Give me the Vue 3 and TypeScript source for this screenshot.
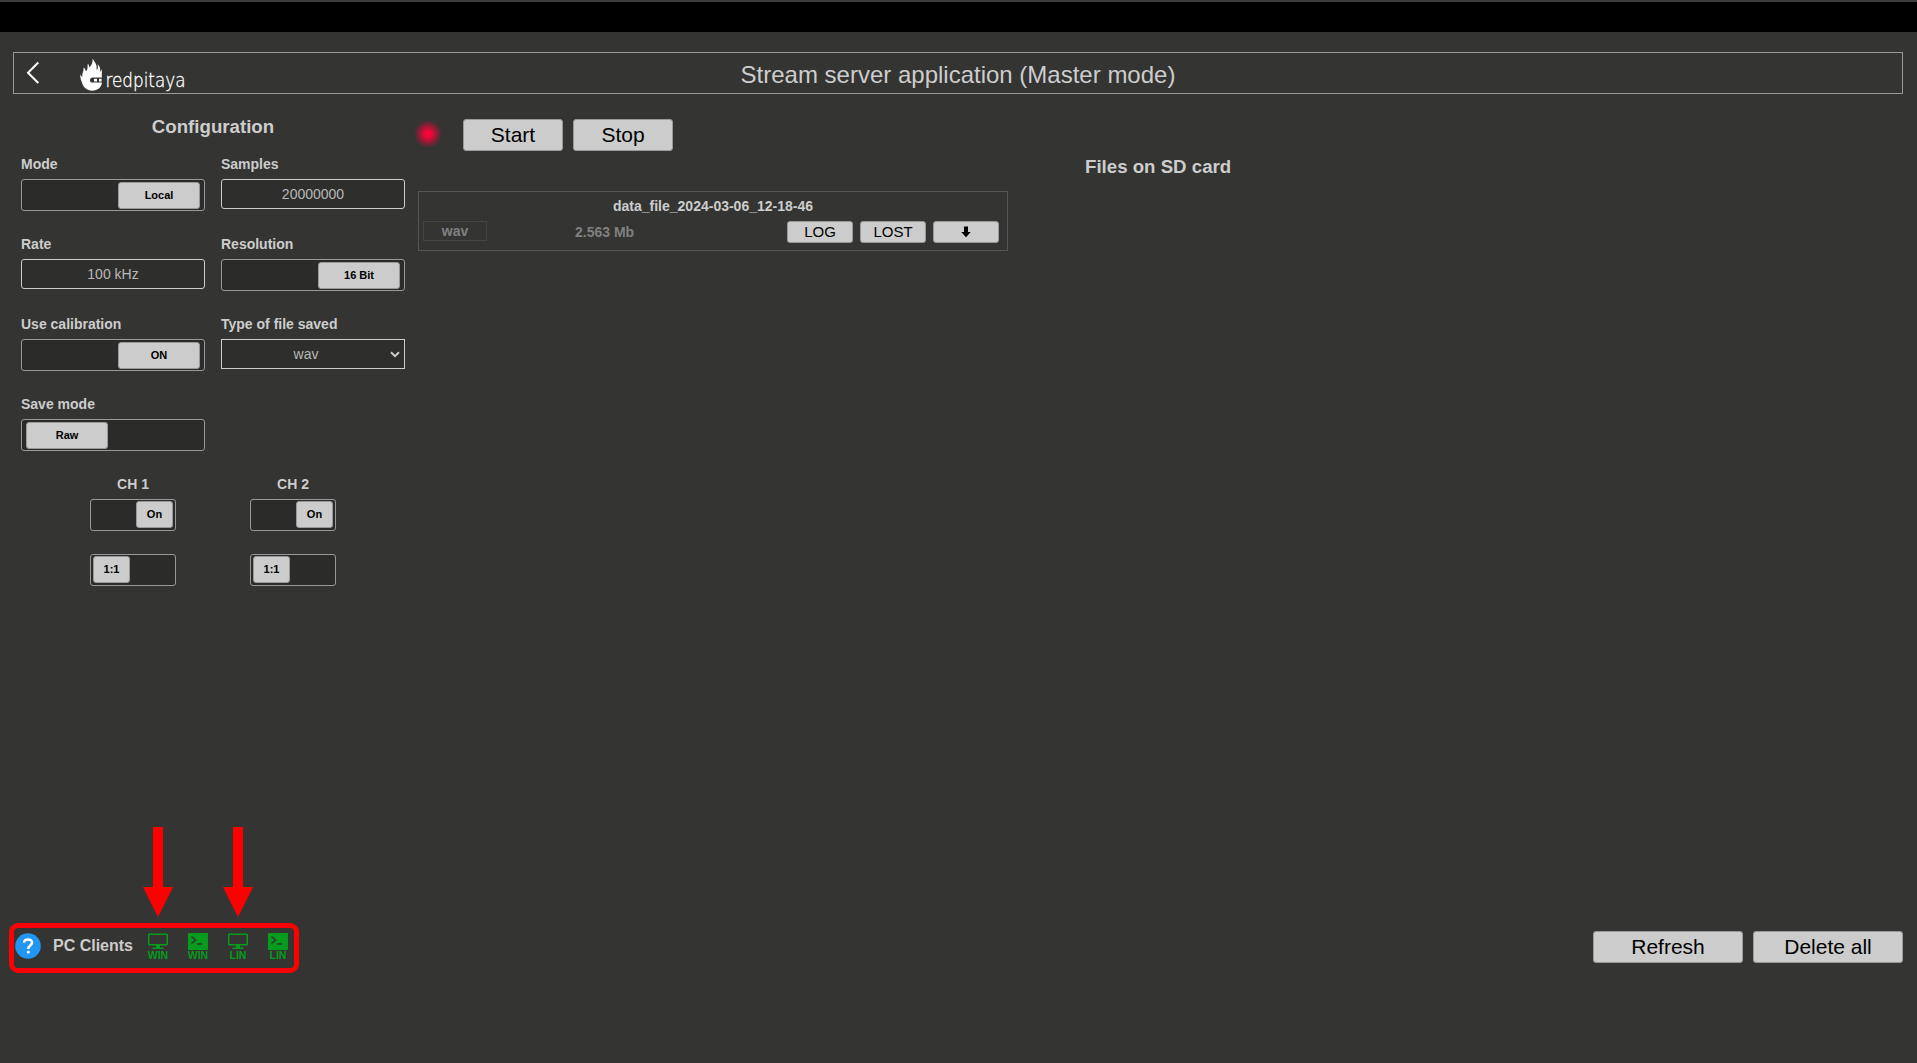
<script setup lang="ts">
interface Field {
  label: string
  kind: 'toggle' | 'input' | 'select'
  value: string
  side?: 'left' | 'right'
}

interface Client {
  icon: 'monitor' | 'console'
  os: string
}

const fields: Field[] = [
  { label: 'Mode', kind: 'toggle', value: 'Local', side: 'right' },
  { label: 'Samples', kind: 'input', value: '20000000' },
  { label: 'Rate', kind: 'input', value: '100 kHz' },
  { label: 'Resolution', kind: 'toggle', value: '16 Bit', side: 'right' },
  { label: 'Use calibration', kind: 'toggle', value: 'ON', side: 'right' },
  { label: 'Type of file saved', kind: 'select', value: 'wav' },
  { label: 'Save mode', kind: 'toggle', value: 'Raw', side: 'left' },
]

const channels: string[] = ['CH 1', 'CH 2']

const clients: Client[] = [
  { icon: 'monitor', os: 'WIN' },
  { icon: 'console', os: 'WIN' },
  { icon: 'monitor', os: 'LIN' },
  { icon: 'console', os: 'LIN' },
]
</script>

<template>
  <div class="page">
    <div class="topbar"></div>

    <header class="header">
      <div class="brand">
        <svg class="back" width="14" height="24" viewBox="0 0 14 24">
          <path d="M12.3 1.5 2 11.7 12.3 22" fill="none" stroke="#fff" stroke-width="2" />
        </svg>
        <svg class="logo" width="116" height="36" viewBox="0 0 116 36">
          <path
            fill="#fff"
            d="M12.6 .5C13.6 3 16.4 5 16.6 8.6C16.7 10.2 16.5 11 16.8 12C17.8 11 18.2 9.5 17.7 6.2C20 8.3 20.6 10.8 20 14C20.8 13.4 21.2 12.4 21.2 11C22.6 13.4 21.7 16 21.7 17.6L22 19.5H12.5Q10 19.6 10 22Q10 24.6 12.5 24.6H22C21.5 29.5 17.5 32.7 12.3 32.7C6.8 32.7 3 29.4 2 24.6C1 22 .1 20.2 .3 16C.8 17.8 1.5 18.6 2.3 18.8C2 14.8 4.1 13.2 3.4 9.6C5 10.6 5.7 11.8 5.8 13.4C8.3 11.4 7.3 8 7.8 5.8C8.8 6.9 9.3 8 9.4 9.4C11.7 7 12.9 4.8 12.6 .5Z"
          />
          <path d="M14 20.8h3v2.6h-3zM19 20.8h2.6v2.6H19z" fill="#fff" />
          <text
            x="25.5"
            y="29.3"
            class="wordmark"
            textLength="80"
            lengthAdjust="spacingAndGlyphs"
          >redpitaya</text>
        </svg>
      </div>
      <h1 class="title">Stream server application (Master mode)</h1>
      <div></div>
    </header>

    <main class="main">
      <section class="config">
        <h2 class="config-title">Configuration</h2>
        <div class="fields">
          <div v-for="f in fields" :key="f.label" class="field">
            <label class="label">{{ f.label }}</label>
            <div v-if="f.kind === 'toggle'" class="toggle" :class="f.side">
              <span class="knob">{{ f.value }}</span>
            </div>
            <div v-else class="input" :class="{ select: f.kind === 'select' }">
              <span class="value">{{ f.value }}</span>
              <svg v-if="f.kind === 'select'" width="10" height="7" viewBox="0 0 10 7">
                <path d="M1 1.2 5 5.2 9 1.2" fill="none" stroke="#ccc" stroke-width="2" />
              </svg>
            </div>
          </div>
        </div>
        <div class="channels">
          <div v-for="c in channels" :key="c" class="channel">
            <label class="label">{{ c }}</label>
            <div class="toggle small right"><span class="knob">On</span></div>
            <div class="toggle small left"><span class="knob">1:1</span></div>
          </div>
        </div>
      </section>

      <section class="stream">
        <div class="controls">
          <span class="led"></span>
          <button class="btn run">Start</button>
          <button class="btn run">Stop</button>
        </div>
        <article class="file">
          <div class="file-name">data_file_2024-03-06_12-18-46</div>
          <div class="file-row">
            <span class="tag">wav</span>
            <span class="size">2.563 Mb</span>
            <div class="file-actions">
              <button class="btn mini">LOG</button>
              <button class="btn mini">LOST</button>
              <button class="btn mini">
                <svg width="10" height="12" viewBox="0 0 10 12">
                  <path d="M3 .5H7V6H9.7L5 11.2.3 6H3Z" fill="#000" />
                </svg>
              </button>
            </div>
          </div>
        </article>
      </section>

      <section class="card">
        <h2 class="card-title">Files on SD card</h2>
      </section>
    </main>

    <footer class="footer">
      <div class="clients">
        <svg class="help" width="26" height="26" viewBox="0 0 26 26">
          <circle cx="13" cy="13" r="12.8" fill="#2196f3" />
          <path
            d="M9 9.8C9 7.6 10.7 6.4 13 6.4s4 1.2 4 3.3c0 2.8-3.7 3-3.7 6.2"
            fill="none"
            stroke="#fff"
            stroke-width="2.5"
          />
          <rect x="11.9" y="17.7" width="2.8" height="2.8" rx="1" fill="#fff" />
        </svg>
        <span class="clients-label">PC Clients</span>
        <div class="client-list">
          <div v-for="(c, i) in clients" :key="i" class="client">
            <svg v-if="c.icon === 'monitor'" width="20" height="17" viewBox="0 0 20 17">
              <rect x="0.75" y="1.25" width="18.5" height="10.5" rx="0.5" fill="none" stroke="#059c1d" stroke-width="1.5" />
              <path d="M8 12h4v2.5h3.5V16h-11v-1.5H8z" fill="#059c1d" />
            </svg>
            <svg v-else width="20" height="17" viewBox="0 0 20 17">
              <rect width="20" height="17" rx="1" fill="#059c1d" />
              <path d="M3.5 3.5 7.5 7 3.5 10.5M9 11h5" fill="none" stroke="#333432" stroke-width="1.5" />
            </svg>
            <span class="os">{{ c.os }}</span>
          </div>
        </div>
      </div>
      <div class="card-actions">
        <button class="btn wide">Refresh</button>
        <button class="btn wide">Delete all</button>
      </div>
    </footer>

    <svg class="marks" width="300" height="160" viewBox="0 0 300 160">
      <path d="M153 7h10v60h10l-15 30-15-30h10zM233 7h10v60h10l-15 30-15-30h10z" fill="#f00" />
      <rect x="11.5" y="105.5" width="285" height="45" rx="6.5" fill="none" stroke="#f00" stroke-width="5" />
    </svg>
  </div>
</template>

<style>
body {
  margin: 0;
  background: #343432;
}
</style>

<style scoped>
.page {
  position: relative;
  box-sizing: border-box;
  height: 1063px;
  overflow: hidden;
  display: flex;
  flex-direction: column;
  background: #343432;
  color: #cdcdcd;
  font-family: "Liberation Sans", Arial, sans-serif;
  font-size: 14px;
}
.page * {
  box-sizing: border-box;
}
.topbar {
  height: 32px;
  flex: none;
  background: #000;
  border-top: 2px solid #3c3c3c;
}
.header {
  margin: 20px 14px 0 13px;
  height: 42px;
  flex: none;
  border: 1px solid #999;
  display: grid;
  grid-template-columns: 1fr auto 1fr;
}
.brand {
  display: flex;
  align-items: flex-start;
}
.back {
  margin: 8px 0 0 12px;
}
.logo {
  margin: 5px 0 0 40px;
  overflow: visible;
}
.wordmark {
  font-family: "DejaVu Sans", sans-serif;
  font-weight: 200;
  font-size: 20px;
  fill: #fff;
  stroke: #fff;
  stroke-width: 0.35px;
}
.title {
  margin: 0;
  font-size: 24px;
  font-weight: 400;
  line-height: 44px;
}
.main {
  flex: none;
  height: 829px;
  display: flex;
}
.config {
  width: 384px;
  margin-left: 21px;
}
.config-title {
  margin: 22px 0 0;
  font-size: 18.67px;
  line-height: 22px;
  text-align: center;
}
.fields {
  margin-top: 16px;
  display: grid;
  grid-template-columns: 184px 184px;
  grid-auto-rows: 80px;
  column-gap: 16px;
}
.label {
  display: block;
  height: 25px;
  line-height: 20px;
  font-weight: 700;
}
.toggle {
  display: flex;
  height: 32px;
  padding: 2px 4px;
  border: 1px solid #999;
  border-radius: 3px;
  background: #2b2b29;
}
.toggle.right {
  justify-content: flex-end;
}
.knob {
  width: 82px;
  height: 27px;
  border: 1px solid #999;
  border-radius: 3px;
  background: #ccc;
  color: #000;
  font-size: 11px;
  font-weight: 700;
  line-height: 25px;
  text-align: center;
}
.input {
  display: flex;
  align-items: center;
  height: 30px;
  border: 1px solid #ccc;
  border-radius: 3px;
  background: #2e2e2c;
  color: #b8b8b8;
}
.select {
  border-radius: 0;
  padding-right: 4px;
}
.value {
  flex: 1;
  text-align: center;
}
.channels {
  display: flex;
  gap: 74px;
  margin-left: 69px;
}
.channel {
  width: 86px;
}
.channel .label {
  text-align: center;
}
.small {
  padding: 1px 2px;
  margin-bottom: 23px;
}
.small .knob {
  width: 37px;
}
.btn {
  display: flex;
  align-items: center;
  justify-content: center;
  padding: 0;
  border: 1px solid #999;
  border-radius: 3px;
  background: #ccc;
  color: #000;
  font-family: inherit;
}
.stream {
  width: 590px;
  margin-left: 13px;
}
.controls {
  display: flex;
  gap: 10px;
  margin: 25px 0 0 -4px;
  height: 32px;
}
.led {
  width: 28px;
  height: 28px;
  margin: 1px 11px 0 0;
  border-radius: 50%;
  background: radial-gradient(circle closest-side, #ff0038 0%, #f80439 18%, rgba(255, 0, 56, 0) 100%);
}
.run {
  width: 100px;
  height: 32px;
  font-size: 21px;
}
.file {
  margin-top: 40px;
  height: 60px;
  border: 1px solid #555;
  padding: 4px 8px 0 4px;
}
.file-name {
  height: 25px;
  line-height: 21px;
  padding-left: 4px;
  text-align: center;
  font-weight: 700;
}
.file-row {
  display: flex;
  align-items: flex-start;
}
.tag {
  width: 64px;
  height: 20px;
  border: 1px solid #444;
  line-height: 18px;
  text-align: center;
  font-weight: 700;
  color: #808080;
}
.size {
  margin-left: 88px;
  line-height: 23px;
  font-weight: 700;
  color: #808080;
}
.file-actions {
  display: flex;
  gap: 7px;
  margin-left: auto;
}
.mini {
  width: 66px;
  height: 22px;
  padding-bottom: 1px;
  font-size: 15px;
}
.card {
  margin-left: 77px;
}
.card-title {
  margin: 62px 0 0;
  font-size: 18.67px;
  line-height: 22px;
}
.footer {
  display: flex;
  justify-content: space-between;
  align-items: flex-start;
  padding: 8px 14px 0 15px;
}
.clients {
  display: flex;
  align-items: flex-start;
}
.help {
  margin-top: 2px;
}
.clients-label {
  width: 95px;
  margin-left: 12px;
  padding-top: 5px;
  font-size: 16px;
  font-weight: 700;
  line-height: 20px;
}
.client-list {
  display: flex;
  gap: 20px;
  padding-top: 2px;
}
.client {
  width: 20px;
  display: flex;
  flex-direction: column;
  align-items: center;
}
.client svg {
  display: block;
}
.os {
  font-size: 10.5px;
  font-weight: 700;
  line-height: 11px;
  color: #059c1d;
}
.card-actions {
  display: flex;
  gap: 10px;
}
.wide {
  width: 150px;
  height: 32px;
  font-size: 21px;
}
.marks {
  position: absolute;
  left: 0;
  top: 820px;
}
</style>
